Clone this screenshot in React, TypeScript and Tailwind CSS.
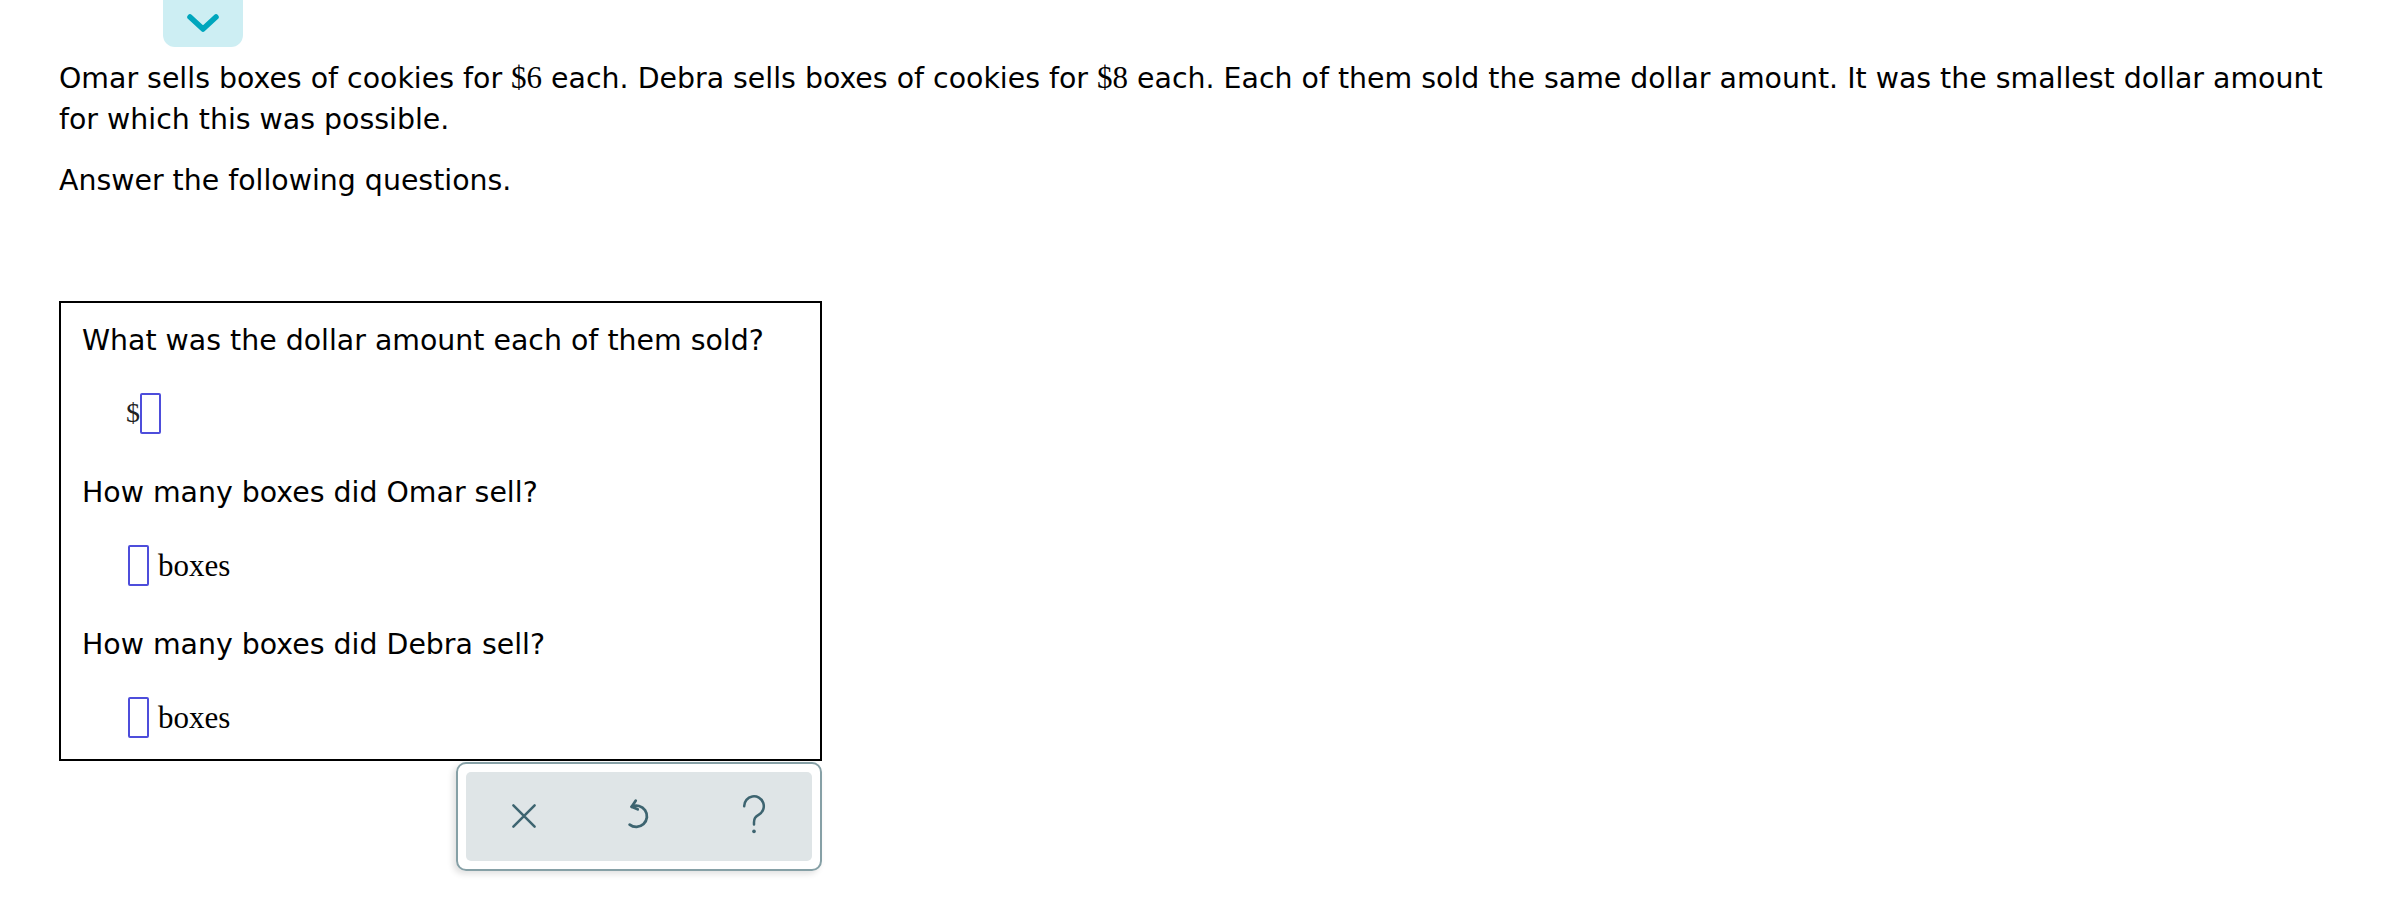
import React from "react";

const sans = "font-['Verdana','DejaVu_Sans',sans-serif]";
const serif = "font-['Liberation_Serif','Times_New_Roman',serif]";

const AnswerBox = () => (
  <span className="inline-block w-[21px] h-[41px] border-2 border-[#4d4ddb] rounded-[2px] align-middle" />
);

const ToolbarButton = ({ children }: { children: React.ReactNode }) => (
  <button className="h-[60px] flex items-center justify-center text-[#3d6470]">
    {children}
  </button>
);

const App = () => {
  return (
    <div className={`${sans} text-black text-[28.4px] leading-[40px] bg-white min-h-[909px]`}>
      {/* collapse tab */}
      <div className="ml-[163px] w-[80px] h-[47px] bg-[#cdeef3] rounded-b-[12px] flex items-center justify-center">
        <svg width="40" height="28" viewBox="0 0 40 28" fill="none">
          <path d="M7 7 L20 19 L33 7" stroke="#00a6bd" strokeWidth="5.5" strokeLinecap="round" strokeLinejoin="round" />
        </svg>
      </div>

      <div className="px-[59px]">
        <p className="mt-[12px] leading-[40.5px]">
          Omar sells boxes of cookies for <span className={`${serif} text-[31px] leading-none`}>$6</span> each. Debra sells boxes of cookies for{" "}
          <span className={`${serif} text-[31px] leading-none`}>$8</span> each. Each of them sold the same dollar amount. It was the smallest dollar amount for which this was possible.
        </p>
        <p className="mt-[21px] leading-[40.5px]">Answer the following questions.</p>

        <div className="mt-[99px] w-[763px] border-2 border-black pl-[21px] pt-[18px] pb-[21px]">
          <div className="h-[40px]">What was the dollar amount each of them sold?</div>
          <div className="mt-[32px] h-[41px] pl-[44px] flex items-center">
            <span className={`${serif} text-[28px] leading-none text-[#222]`}>$</span>
            <AnswerBox />
          </div>

          <div className="mt-[39px] h-[40px]">How many boxes did Omar sell?</div>
          <div className="mt-[32px] h-[41px] pl-[46px] flex items-center">
            <AnswerBox />
            <span className={`${serif} text-[31px] leading-none ml-[9px]`}>boxes</span>
          </div>

          <div className="mt-[39px] h-[40px]">How many boxes did Debra sell?</div>
          <div className="mt-[32px] h-[41px] pl-[46px] flex items-center">
            <AnswerBox />
            <span className={`${serif} text-[31px] leading-none ml-[9px]`}>boxes</span>
          </div>
        </div>

        <div className="mt-[1px] ml-[397px] w-[366px] h-[109px] border-2 border-[#86a0a6] rounded-[10px] p-[8px] shadow-[-3px_3px_6px_rgba(0,0,0,0.12)]">
          <div className="h-full bg-[#dfe5e7] rounded-[5px] grid grid-cols-3 items-center">
            <ToolbarButton>
              <svg width="30" height="30" viewBox="0 0 24 24" fill="none" stroke="currentColor" strokeWidth="2" strokeLinecap="round">
                <path d="M3.5 3.5 L20.5 20.5 M20.5 3.5 L3.5 20.5" />
              </svg>
            </ToolbarButton>
            <ToolbarButton>
              <svg width="32" height="36" viewBox="0 0 24 27" fill="none" stroke="currentColor" strokeWidth="2.1" strokeLinecap="round" strokeLinejoin="round">
                <path d="M9.5 2 L6.5 6.5 L11 8.5" />
                <path d="M6.5 6.5 A8 8 0 1 1 5 20" />
              </svg>
            </ToolbarButton>
            <ToolbarButton>
              <svg width="28" height="42" viewBox="0 0 20 30" fill="none" stroke="currentColor" strokeWidth="1.8" strokeLinecap="round">
                <path d="M3 8 A7 7 0 1 1 13.5 14 C11 15.5 10 16.5 10 19.5 V21" />
                <circle cx="10" cy="26" r="1.3" fill="currentColor" stroke="none" />
              </svg>
            </ToolbarButton>
          </div>
        </div>
      </div>
    </div>
  );
};

export default App;
